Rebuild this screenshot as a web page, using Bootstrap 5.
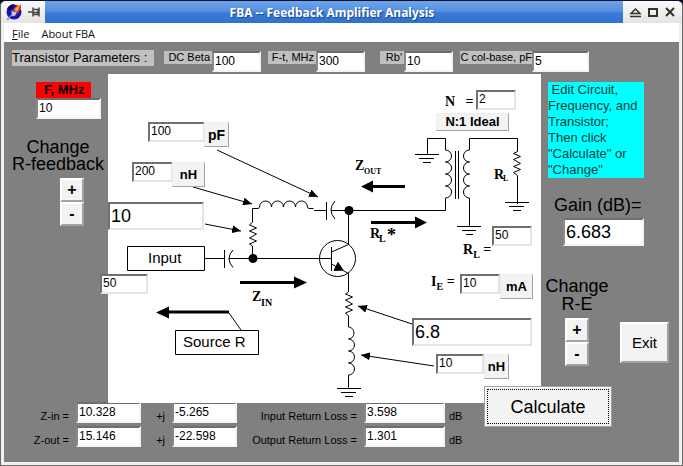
<!DOCTYPE html>
<html lang="en">
<head>
<meta charset="utf-8">
<meta name="viewport" content="width=device-width, initial-scale=1">
<title>FBA -- Feedback Amplifier Analysis</title>
<link href="https://cdn.jsdelivr.net/npm/bootstrap@5.3.0/dist/css/bootstrap.min.css" rel="stylesheet">
<style>
  body { font-family: "Liberation Sans", Arial, sans-serif; font-size: 12px; line-height: 16px; color: #000; background: #0b0d20; }
  .app-window { min-height: 100vh; background: #f3f1ef; border: 1px solid #6b6866; border-top: 1px solid #0a1230; border-radius: 6px 6px 0 0; overflow: hidden; }
  .title-strip { height: 22px; background: linear-gradient(#6fa5ea, #5590e0 45%, #3a7bd6 55%, #2f72d0); }
  .title-end { background: linear-gradient(#fafafa, #e4e4e4); }
  .title-strip h1 { font: bold 12px/23px "Noto Sans", "Open Sans", sans-serif; color: #fff; text-shadow: 1px 1px 1px #1d4688; }
  .title-end button { width: 17px; height: 22px; line-height: 0; }
  .menu-strip { height: 19px; background: #fff; margin-left: 3px; margin-right: 3px; font: 11px/22px "Open Sans", "Noto Sans", sans-serif; }
  .menu-strip a { color: #111; text-decoration: none; }
  .workspace { background: #808080; margin: 0 3px 3px; }
  .chip { background: #c0c0c0; }
  .params { height: 32px; padding: 9px 0 0 8px; }
  .params label { height: 13px; line-height: 13px; font-size: 11px; text-align: right; padding-right: 2px; white-space: nowrap; flex-shrink: 0; }
  .params h2 { font-size: 13px; line-height: 16px; height: 16px; width: 142px; margin: -1px 10px 0 0; flex-shrink: 0; }
  .l-wide { width: 72px; }
  .l-mid { width: 48px; }
  .l-slim { width: 24px; }
  .sunk { border: 2px solid; border-color: #707070 #e4e4e4 #e4e4e4 #707070; border-radius: 0; background: #fff; color: #000; font-size: 12px; line-height: 14px; height: 21px; padding: 0 1px 2px; outline: 0; }
  .sunk.framed { border-color: #6e6e6e #f4f4f4 #f4f4f4 #8a8a8a; }
  .sunk.big { font-size: 18px; line-height: 20px; height: 28px; padding-bottom: 0; }
  .raised { background: #f3f3f3; color: #000; border: 2px solid; border-color: #fff #a2a2a2 #a2a2a2 #fff; border-radius: 0; padding: 0; font-size: 13px; line-height: 16px; }
  .canvas .raised { border-width: 1px; border-color: #eee #a2a2a2 #a2a2a2 #eee; }
  .spin { width: 24px; height: 24px; font-size: 16px; font-weight: bold; }
  .w-param { width: 49px; }
  .w-short { width: 57px; }
  .w-result { width: 65px; }
  .w-loss { width: 81px; }
  .gap-a { margin-right: 7px; }
  .gap-b { margin-right: 15px; }
  .side-left { width: 104px; padding-top: 8px; }
  .side-right { padding-top: 8px; padding-left: 7px; min-width: 130px; }
  .freq { width: 65px; margin-left: 32px; }
  .freq label { width: 55px; height: 16px; background: #f00; font-weight: bold; font-size: 13px; padding-left: 8px; }
  .heading { font-size: 18px; line-height: 17px; }
  .change-rf { margin: 20px 0 5px; padding-left: 4px; }
  .hint { width: 96px; background: #0ff; font-size: 13px; color: #053a3a; }
  .canvas { width: 433px; height: 329px; background: #fff; }
  .canvas > .sunk, .canvas > .raised, .canvas > label { position: absolute; }
  .canvas > svg { position: absolute; inset: 0; }
  .canvas > label, .canvas svg .serif { font-family: "Liberation Serif", "Times New Roman", serif; font-weight: bold; font-size: 14px; }
  .canvas sub, .canvas svg .small-letter { font-size: 10px; }
  .canvas svg .tiny-letter { font-size: 8px; }
  .canvas sub { bottom: -4px; }
  .bold { font-weight: bold; }
  #cap { left: 40px; top: 48px; width: 57px; height: 20px; }
  #cap-unit { left: 96px; top: 48px; width: 25px; height: 25px; font-size: 14px; }
  #ind { left: 24px; top: 88px; width: 41px; height: 20px; }
  #ind-unit { left: 64px; top: 88px; width: 33px; height: 25px; }
  #rfb { left: 0; top: 128px; width: 96px; }
  #rsrc { left: -8px; top: 200px; width: 48px; height: 20px; }
  #ratio { left: 368px; top: 16px; width: 40px; height: 20px; }
  #ratio-btn { left: 328px; top: 39px; width: 73px; height: 18px; line-height: 14px; }
  #load { left: 384px; top: 152px; width: 40px; height: 20px; }
  #cur { left: 352px; top: 200px; width: 40px; height: 20px; }
  #cur-unit { left: 392px; top: 200px; width: 33px; height: 25px; }
  #rem { left: 304px; top: 244px; width: 120px; }
  #lem { left: 328px; top: 280px; width: 48px; height: 20px; }
  #lem-unit { left: 376px; top: 280px; width: 25px; height: 25px; }
  .lab-n { left: 337px; top: 20px; }
  .lab-load { left: 355px; top: 168px; }
  .lab-cur { left: 323px; top: 200px; }
  .canvas > .raised.calc { left: 376px; top: 312px; width: 128px; height: 41px; z-index: 2; font-size: 18px; border-color: #a0a0a0; outline: 1px dotted #000; outline-offset: -4px; box-shadow: inset 1px 1px #fff; }
  .exit { width: 49px; height: 41px; font-size: 15px; margin: 76px 0 0 10px; }
  .gain { margin: 19px 0 0 6px; }
  .gain .sunk { width: 81px; margin: 4px 0 0 9px; }
  .change-e { margin-top: 31px; width: 62px; }
  .change-e .heading { line-height: 18px; margin-bottom: 5px; }
  .results { display: grid; grid-template-columns: 68px 65px 31px 65px 127px 81px auto; row-gap: 3px; padding: 0 0 12px; margin-top: -1px; font-size: 11px; }
  .results label, .results span { line-height: 14px; padding-top: 7px; white-space: nowrap; }
  .results label { text-align: right; padding-right: 3px; }
</style>
</head>
<body>
<div class="app-window d-flex flex-column">
  <header class="title-strip d-flex">
    <div class="title-end d-flex align-items-center gap-1 ps-1">
      <svg width="18" height="18" viewBox="0 0 18 18" aria-hidden="true">
        <circle cx="9" cy="9" r="7.500" fill="#1616b8"/>
        <path d="M2 6a8 8 0 0 1 7-5l-3 8z" fill="#080870"/>
        <path d="M8 7l4-5 2 1 2-2v4l-3 5-3 2z" fill="#f0431c"/>
        <path d="M10 6l4-4-1 5-2 2z" fill="#ffb43a"/>
        <path d="M2 16l5-5-1-4 3 2 3-1-2 5-4 0-3 4z" fill="#d4d8ec" stroke="#555b8e" stroke-width=".6"/>
      </svg>
      <svg width="18" height="12" viewBox="0 0 18 12" aria-hidden="true" fill="none" stroke="#444" stroke-width="1.500"><path d="M1 6h5M6 1.500v9M6 3.500h5v5H6M6 6.500h5M12 1.500v9"/></svg>
    </div>
    <h1 class="flex-grow-1 text-center m-0 pe-1">FBA -- Feedback Amplifier Analysis</h1>
    <div class="title-end d-flex ps-1 pe-1">
      <button class="btn p-0 border-0" aria-label="Shade"><svg width="13" height="12" viewBox="0 0 13 12" fill="none" stroke="#333" stroke-width="1.500"><path d="M2 7.500L6.500 3 11 7.500zM1 10.500h11"/></svg></button>
      <button class="btn p-0 border-0" aria-label="Maximize"><svg width="12" height="12" viewBox="0 0 12 12" fill="none" stroke="#333" stroke-width="2"><path d="M2 3h8v7H2z"/></svg></button>
      <button class="btn p-0 border-0" aria-label="Close"><svg width="12" height="12" viewBox="0 0 12 12" stroke="#333" stroke-width="2"><path d="M2 2l8 8M10 2l-8 8"/></svg></button>
    </div>
  </header>
  <nav class="menu-strip d-flex ps-1">
    <a href="#" class="ms-1"><u>F</u>ile</a>
    <a href="#" class="ms-2 ps-1">About FBA</a>
  </nav>

  <main class="workspace flex-grow-1">
    <section class="params d-flex align-items-start">
      <h2 class="chip text-nowrap">Transistor Parameters :</h2>
      <label class="chip l-mid" for="beta">DC Beta</label>
      <input class="sunk framed w-param gap-a" id="beta" value="100">
      <label class="chip l-mid" for="ft">F-t, MHz</label>
      <input class="sunk framed w-param gap-b" id="ft" value="300">
      <label class="chip l-slim" for="rb">Rb'</label>
      <input class="sunk framed w-param gap-a" id="rb" value="10">
      <label class="chip l-wide pe-0" for="ccb">C col-base, pF</label>
      <input class="sunk framed w-short" id="ccb" value="5">
    </section>

    <div class="d-flex">
      <section class="side-left flex-shrink-0">
        <div class="freq">
          <label class="d-block" for="freq">F, MHz</label>
          <input class="sunk framed w-100 d-block" id="freq" value="10">
        </div>
        <div class="heading change-rf text-center text-nowrap">Change<br>R-feedback</div>
        <div class="d-flex flex-column align-items-center ps-4 ms-2">
          <button class="raised spin" aria-label="Increase R-feedback">+</button>
          <button class="raised spin" aria-label="Decrease R-feedback">-</button>
        </div>
      </section>

      <section class="canvas position-relative flex-shrink-0">
        <svg width="433" height="329" viewBox="108 74 433 329" fill="none" stroke="#000" stroke-width="1" aria-hidden="true">
          <defs>
            <marker id="tip" viewBox="0 0 9 8" refX="9" refY="4" markerWidth="9" markerHeight="8" markerUnits="userSpaceOnUse" orient="auto"><path d="M0 0l9 4-9 4z" fill="#000" stroke="none"/></marker>
          </defs>
          <!-- input terminal, coupling capacitor and base lead -->
          <path d="M127.500 246.500h77v24h-77zM204.500 258.500h20M224.500 250v18M233 250q-8 8.500 0 17.500M229 258.500h102"/>
          <!-- feedback branch: resistor, inductor, capacitor -->
          <path d="M252.500 258v-12l-3-2 7-3-7-3 7-4-7-3 7-3-7-3 3-3v-13.500h6l1-1.500a6 6 0 0 1 12 0a6 6 0 0 1 12 0a6 6 0 0 1 12 0a6 6 0 0 1 12 0l1 1.500h5M314 210.500h12.500M326.500 202v18M335 201q-8 9 0 18M331 210.500h114.500"/>
          <!-- collector and transistor -->
          <path d="M348.500 210v34.500L331.500 252M331.500 247v24M331.500 264l17 9.500v18.500"/>
          <circle cx="337.500" cy="258.500" r="18"/>
          <path d="M338 262.500l5 7.500-9 .5z" fill="#000"/>
          <!-- emitter resistor, inductor and ground -->
          <path d="M348.500 292l-3 2 7 3-7 3 7 4-7 3 7 3-7 3 3 3v11a5.500 6 0 0 1 0 12a6 6 0 0 1 0 12a6 6 0 0 1 0 12a6 6 0 0 1 0 12v12.500M337 388.500h24M341 392.500h15M345 396.500h8"/>
          <!-- transformer -->
          <path d="M445.500 210.500V198a6 6 0 0 0 0-12a6 6 0 0 0 0-12a6 6 0 0 0 0-12a6 6 0 0 0 0-12v-11.500h-18v16M415 154.500h24M419 158.500h15M423 162.500h8"/>
          <path d="M455.500 151v48M458.500 151v48"/>
          <path d="M469.500 226V198a6 6 0 0 1 0-12a6 6 0 0 1 0-12a6 6 0 0 1 0-12a6 6 0 0 1 0-12v-11.500h48v13l-4 2 7 3-7 3 7 4-7 3 7 3-7 3 4 3v28.500M505 202.500h24M509 206.500h15M513 210.500h8M457 226.500h24M462 230.500h14M466 234.500h7"/>
          <g fill="#000" stroke="none">
            <circle cx="253" cy="258.500" r="4.500"/><circle cx="349" cy="210.500" r="4.500"/>
            <path d="M156 312.500l13-6v4h60v3h-60v5zM307 282.500l-13-6v4.500h-54v3h54v4.500zM361 186.500l12-6v4.500h32v3h-32v4.500zM427 222.500l-12-6v4.500h-44v3h44v4.500z"/>
          </g>
          <!-- callouts -->
          <path d="M217 150L318 197" marker-end="url(#tip)"/>
          <path d="M193 187L252 204" marker-end="url(#tip)"/>
          <path d="M205 224L241 231" marker-end="url(#tip)"/>
          <path d="M412 324L358 306" marker-end="url(#tip)"/>
          <path d="M434 366L361 355" marker-end="url(#tip)"/>
          <path d="M229 313l12 17M175.500 330.500h83v24h-83z"/>
          <g fill="#000" stroke="none">
            <g font-size="15" font-family="Liberation Sans, Arial, sans-serif"><text x="148" y="263">Input</text><text x="183" y="347">Source R</text></g>
            <g class="serif">
              <text x="355" y="170">Z</text><text class="tiny-letter" x="364" y="174">OUT</text>
              <text x="252" y="301">Z</text><text class="small-letter" x="261" y="306">IN</text>
              <text x="370" y="238">R</text><text class="small-letter" x="379" y="242">L</text><text x="387" y="241" font-size="18">*</text>
              <text x="494" y="179">R</text><text class="tiny-letter" x="503" y="181">L</text>
            </g>
          </g>
        </svg>

        <input class="sunk" id="cap" value="100" aria-label="Feedback capacitance">
        <button class="raised bold" id="cap-unit">pF</button>
        <input class="sunk" id="ind" value="200" aria-label="Feedback inductance">
        <button class="raised bold" id="ind-unit">nH</button>
        <input class="sunk big" id="rfb" value="10" aria-label="Feedback resistance">
        <input class="sunk" id="rsrc" value="50" aria-label="Source resistance">
        <label class="lab-n" for="ratio">N &nbsp; =</label>
        <input class="sunk" id="ratio" value="2">
        <button class="raised bold" id="ratio-btn">N:1 Ideal</button>
        <label class="lab-load" for="load">R<sub>L</sub> =</label>
        <input class="sunk" id="load" value="50">
        <label class="lab-cur" for="cur">I<sub>E</sub> =</label>
        <input class="sunk" id="cur" value="10">
        <button class="raised bold" id="cur-unit">mA</button>
        <input class="sunk big" id="rem" value="6.8" aria-label="Emitter resistance">
        <input class="sunk" id="lem" value="10" aria-label="Emitter inductance">
        <button class="raised bold" id="lem-unit">nH</button>
        <button class="raised calc">Calculate</button>
      </section>

      <section class="side-right flex-grow-1">
        <p class="hint m-0 text-nowrap">&nbsp;Edit Circuit,<br>Frequency, and<br>Transistor;<br>Then click<br>"Calculate" or<br>"Change"</p>
        <div class="gain">
          <label class="heading d-block text-nowrap" for="gain">Gain (dB)=</label>
          <input class="sunk framed big d-block" id="gain" value="6.683">
        </div>
        <div class="d-flex align-items-start">
          <div class="change-e d-flex flex-column align-items-center flex-shrink-0 pe-1">
            <div class="heading text-center text-nowrap">Change<br>R-E</div>
            <button class="raised spin" aria-label="Increase R-E">+</button>
            <button class="raised spin" aria-label="Decrease R-E">-</button>
          </div>
          <button class="raised exit flex-shrink-0">Exit</button>
        </div>
      </section>
    </div>

    <section class="results">
      <label for="zin">Z-in =</label><input class="sunk framed w-result ms-1" id="zin" value="10.328">
      <label for="zinj">+j</label><input class="sunk framed w-result ms-1" id="zinj" value="-5.265">
      <label for="irl">Input Return Loss =</label><input class="sunk framed w-loss ms-1" id="irl" value="3.598"><span class="ps-2">dB</span>
      <label for="zout">Z-out =</label><input class="sunk framed w-result ms-1" id="zout" value="15.146">
      <label for="zoutj">+j</label><input class="sunk framed w-result ms-1" id="zoutj" value="-22.598">
      <label for="orl">Output Return Loss =</label><input class="sunk framed w-loss ms-1" id="orl" value="1.301"><span class="ps-2">dB</span>
    </section>
  </main>
</div>
<script src="https://cdn.jsdelivr.net/npm/bootstrap@5.3.0/dist/js/bootstrap.bundle.min.js"></script>
</body>
</html>
